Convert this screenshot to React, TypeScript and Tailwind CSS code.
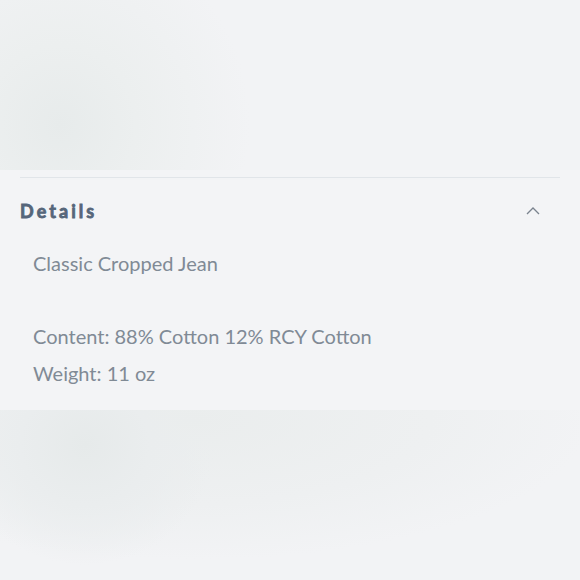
import React from "react";

const lines = [
  "Classic Cropped Jean",
  "",
  "Content: 88% Cotton 12% RCY Cotton",
  "Weight: 11 oz",
];

const App: React.FC = () => {
  return (
    <div className="w-[580px] h-[580px] flex flex-col bg-[#f2f3f5] overflow-hidden font-['Lato','Noto_Sans',sans-serif]">
      {/* blurred photo above */}
      <div className="h-[170px] shrink-0 bg-[radial-gradient(ellipse_190px_200px_at_60px_125px,#e7ebeb_0%,#ecefef_40%,#f2f3f5_100%)]" />

      <section className="shrink-0 bg-[#f3f4f6] px-5 pt-[7px] pb-[19px]">
        <div className="border-t border-[#e1e5e9]">
          <button className="mt-[19px] w-full flex items-center justify-between text-left">
            <span className="text-[18px] leading-[28px] font-bold tracking-[0.17em] text-[#56667a] [-webkit-text-stroke:0.8px_#56667a]">
              Details
            </span>
            <svg
              width="14"
              height="8"
              viewBox="0 0 14 8"
              fill="none"
              className="mr-5"
            >
              <polyline
                points="1,7 7,1 13,7"
                stroke="#7a838e"
                strokeWidth="1.3"
              />
            </svg>
          </button>
          <div className="mt-5 pl-[13px] text-[20px] leading-[36.5px] text-[#808a95]">
            {lines.map((l, i) => (
              <p key={i} className="h-[36.5px]">
                {l}
              </p>
            ))}
          </div>
        </div>
      </section>

      {/* blurred photo below */}
      <div className="flex-1 bg-[radial-gradient(ellipse_130px_120px_at_85px_35px,#e6eaea_0%,#eaedee_50%,transparent_100%),radial-gradient(ellipse_400px_140px_at_190px_10px,#eaeded_0%,#eef0f1_60%,#f2f3f5_100%)]" />
    </div>
  );
};

export default App;
